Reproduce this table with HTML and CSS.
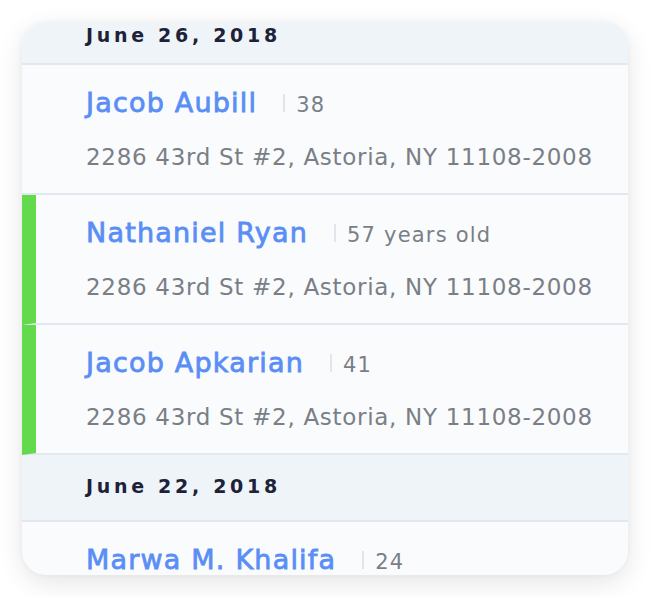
FILE: index.html
```html
<!DOCTYPE html>
<html>
<head>
<meta charset="utf-8">
<link rel="stylesheet" href="styles.css">
</head>
<body>
<div class="card">
  <div class="list">
    <div class="date first">June 26, 2018</div>
    <div class="row">
      <div class="line1"><span class="name">Jacob Aubill</span><span class="sep"></span><span class="age">38</span></div>
      <div class="addr">2286 43rd St #2, Astoria, NY 11108-2008</div>
    </div>
    <div class="row flag">
      <div class="line1"><span class="name">Nathaniel Ryan</span><span class="sep"></span><span class="age">57 years old</span></div>
      <div class="addr">2286 43rd St #2, Astoria, NY 11108-2008</div>
    </div>
    <div class="row flag">
      <div class="line1"><span class="name">Jacob Apkarian</span><span class="sep"></span><span class="age">41</span></div>
      <div class="addr">2286 43rd St #2, Astoria, NY 11108-2008</div>
    </div>
    <div class="date">June 22, 2018</div>
    <div class="row">
      <div class="line1"><span class="name">Marwa M. Khalifa</span><span class="sep"></span><span class="age">24</span></div>
      <div class="addr">2286 43rd St #2, Astoria, NY 11108-2008</div>
    </div>
  </div>
</div>
</body>
</html>
```
FILE: styles.css
```css
html, body { margin: 0; padding: 0; background: #ffffff; }
body { padding: 22px; font-family: "DejaVu Sans", sans-serif; }
.card {
  width: 606px;
  height: 553px;
  border-radius: 24px;
  overflow: hidden;
  background: #f9fbfd;
  box-shadow: 0 8px 26px rgba(0,0,0,0.10), 0 0 6px rgba(0,0,0,0.04);
}
.list { margin-top: -24px; }
.date {
  height: 67px;
  box-sizing: border-box;
  display: flex;
  align-items: center;
  padding-left: 64px;
  padding-bottom: 4px;
  background: #eff4f8;
  border-bottom: 2px solid #e2e8ef;
  font-weight: bold;
  font-size: 19px;
  letter-spacing: 3.7px;
  color: #1e2238;
}
.date.first { padding-top: 8px; padding-bottom: 0; }
.row {
  height: 130px;
  box-sizing: border-box;
  border-bottom: 2px solid #e2e8ef;
  padding: 22px 0 0 64px;
}
.row.flag { border-left: 14px solid #63d94c; padding-left: 50px; }
.line1 { display: flex; align-items: baseline; height: 32px; }
.name {
  font-size: 27px;
  line-height: 32px;
  letter-spacing: 1.2px;
  color: #5a8ef5;
  -webkit-text-stroke: 0.8px #5a8ef5;
}
.sep { width: 2px; height: 18px; background: #e1e6ec; margin: 0 11px 0 26px; }
.age { font-size: 21px; letter-spacing: 1.2px; color: #7a7f86; }
.addr { margin-top: 24px; font-size: 23px; line-height: 28px; letter-spacing: 0.7px; color: #7a7f86; }
```
